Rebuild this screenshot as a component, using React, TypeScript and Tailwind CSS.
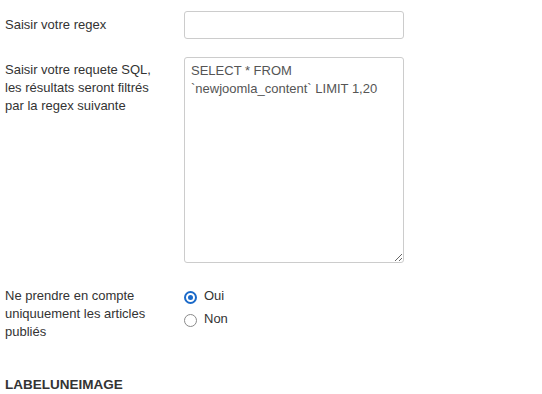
import { useState } from "react"

function Radio({ checked, label, onClick }: { checked: boolean; label: string; onClick: () => void }) {
  return (
    <label className="flex items-center h-[23px] cursor-pointer" onClick={onClick}>
      {checked ? (
        <span className="w-[13px] h-[13px] rounded-full border-2 border-[#1b6ac9] flex items-center justify-center">
          <span className="w-[5px] h-[5px] rounded-full bg-[#1b6ac9]" />
        </span>
      ) : (
        <span className="w-[13px] h-[13px] rounded-full border-[1.5px] border-[#8a8a8a]" />
      )}
      <span className="ml-[7px] -mt-[4px]">{label}</span>
    </label>
  )
}

export default function App() {
  const [published, setPublished] = useState(true)

  return (
    <div className="w-[542px] h-[394px] bg-white text-[#333] text-[13px] leading-[18px] pl-[5px] pt-[11px] font-['Liberation_Sans',Arial,sans-serif]">
      <div className="grid grid-cols-[179px_220px]">
        <div className="pt-[5px]">Saisir votre regex</div>
        <input
          type="text"
          className="h-[28px] border border-[#ccc] rounded-[3px] px-[6px] outline-none text-[#555]"
        />
      </div>

      <div className="grid grid-cols-[179px_220px] mt-[18px]">
        <div className="pt-[4px]">
          Saisir votre requete SQL,
          <br />
          les résultats seront filtrés
          <br />
          par la regex suivante
        </div>
        <textarea
          className="h-[206px] border border-[#ccc] rounded-[3px] px-[6px] py-[4px] outline-none text-[#555] leading-[18px] resize"
          defaultValue="SELECT * FROM `newjoomla_content` LIMIT 1,20"
        />
      </div>

      <div className="grid grid-cols-[179px_220px] mt-[24px]">
        <div>
          Ne prendre en compte
          <br />
          uniquuement les articles
          <br />
          publiés
        </div>
        <div className="-mt-[1px]">
          <Radio checked={published} label="Oui" onClick={() => setPublished(true)} />
          <Radio checked={!published} label="Non" onClick={() => setPublished(false)} />
        </div>
      </div>

      <div className="mt-[35px] font-bold text-[13.5px]">LABELUNEIMAGE</div>
    </div>
  )
}
